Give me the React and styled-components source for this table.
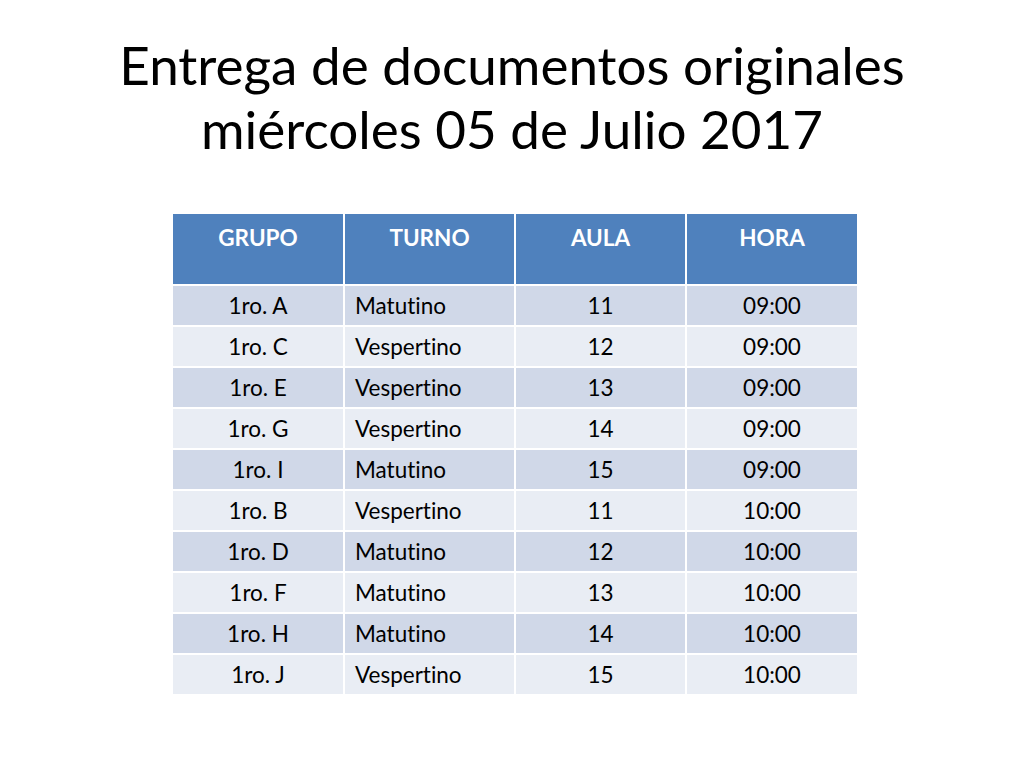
import React from 'react';
import styled, { createGlobalStyle } from 'styled-components';

const GlobalStyle = createGlobalStyle`
  html, body {
    margin: 0;
    padding: 0;
    background: #ffffff;
  }
`;

const Slide = styled.div`
  width: 1024px;
  height: 768px;
  background: #ffffff;
  font-family: Lato, "Open Sans", sans-serif;
  font-variant-ligatures: none;
  display: flex;
  flex-direction: column;
  align-items: center;
`;

const Title = styled.h1`
  margin: 33px 0 0 0;
  font-weight: 400;
  font-size: 53px;
  line-height: 64px;
  color: #000000;
  text-align: center;
`;

const Table = styled.table`
  margin-top: 53px;
  margin-left: 6px;
  border-collapse: collapse;
  width: 684px;
  table-layout: fixed;
  font-size: 22.5px;
`;

const HeadCell = styled.th`
  background: #4f81bd;
  color: #ffffff;
  font-weight: 700;
  height: 71px;
  padding: 10px 10px 0;
  vertical-align: top;
  text-align: center;
  border: 2px solid #ffffff;
  border-top: none;
  box-sizing: border-box;
  &:first-child { border-left: none; }
  &:last-child { border-right: none; }
`;

const Row = styled.tr`
  background: ${({ $odd }) => ($odd ? '#d0d8e8' : '#e9edf4')};
`;

const Cell = styled.td`
  height: 41px;
  padding: 0 10px;
  text-align: ${({ $align }) => $align || 'center'};
  color: #000000;
  border: 2px solid #ffffff;
  box-sizing: border-box;
  &:first-child { border-left: none; }
  &:last-child { border-right: none; }
`;

const rows = [
  ['1ro. A', 'Matutino', '11', '09:00'],
  ['1ro. C', 'Vespertino', '12', '09:00'],
  ['1ro. E', 'Vespertino', '13', '09:00'],
  ['1ro. G', 'Vespertino', '14', '09:00'],
  ['1ro. I', 'Matutino', '15', '09:00'],
  ['1ro. B', 'Vespertino', '11', '10:00'],
  ['1ro. D', 'Matutino', '12', '10:00'],
  ['1ro. F', 'Matutino', '13', '10:00'],
  ['1ro. H', 'Matutino', '14', '10:00'],
  ['1ro. J', 'Vespertino', '15', '10:00'],
];

const App = () => (
  <Slide>
    <GlobalStyle />
    <Title>
      Entrega de documentos originales
      <br />
      miércoles 05 de Julio 2017
    </Title>
    <Table>
      <thead>
        <tr>
          <HeadCell>GRUPO</HeadCell>
          <HeadCell>TURNO</HeadCell>
          <HeadCell>AULA</HeadCell>
          <HeadCell>HORA</HeadCell>
        </tr>
      </thead>
      <tbody>
        {rows.map((r, i) => (
          <Row key={i} $odd={i % 2 === 0}>
            <Cell>{r[0]}</Cell>
            <Cell $align="left">{r[1]}</Cell>
            <Cell>{r[2]}</Cell>
            <Cell>{r[3]}</Cell>
          </Row>
        ))}
      </tbody>
    </Table>
  </Slide>
);

export default App;
